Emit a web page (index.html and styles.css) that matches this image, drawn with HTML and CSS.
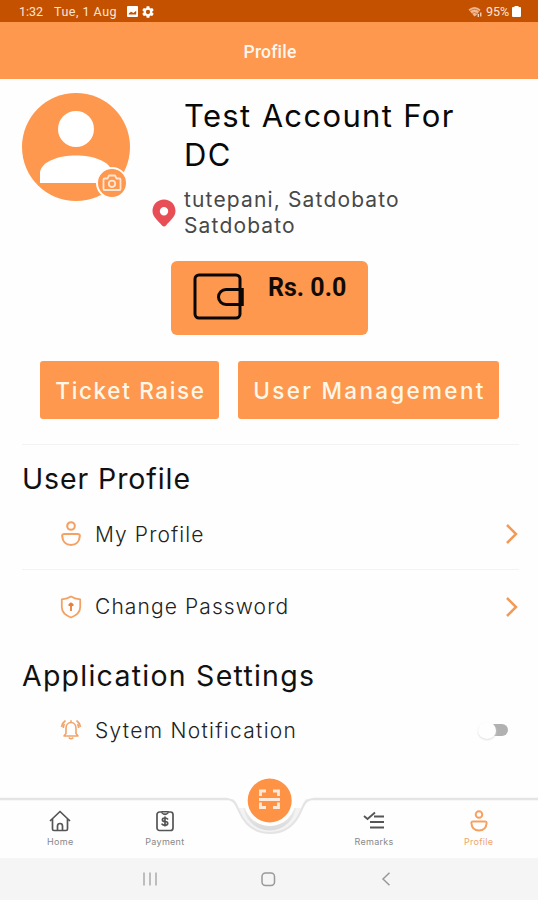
FILE: index.html
```html
<!DOCTYPE html>
<html lang="en">
<head>
    <meta charset="UTF-8">
    <meta name="viewport" content="width=device-width, initial-scale=1.0">
    <title>Profile</title>
    <link rel="stylesheet" href="styles.css">
</head>
<body>
    <div class="status-bar">
        <span class="time">1:32</span>
        <span class="date">Tue, 1 Aug</span>
        <svg class="status-icon" width="11" height="11" viewBox="0 0 11 11"><path fill="#fff" fill-rule="evenodd" d="M1 0h9a1 1 0 0 1 1 1v9a1 1 0 0 1-1 1H1a1 1 0 0 1-1-1V1a1 1 0 0 1 1-1zM1.800 8.500h7.400V4.800L6.500 7 4 5.800 1.800 7.500z"/></svg>
        <svg class="status-icon gear" width="12" height="12" viewBox="2 2 20 20"><path fill="#fff" d="M19.140 12.940c.04-.3.06-.61.06-.94 0-.32-.02-.64-.07-.94l2.030-1.580a.49.49 0 0 0 .12-.61l-1.920-3.320a.49.49 0 0 0-.59-.22l-2.390.96c-.5-.38-1.030-.7-1.620-.94l-.36-2.540a.48.48 0 0 0-.48-.41h-3.840c-.24 0-.43.17-.47.41l-.36 2.540c-.59.24-1.130.57-1.620.94l-2.390-.96a.48.48 0 0 0-.59.22L2.740 8.870c-.12.21-.08.47.12.61l2.030 1.580c-.05.3-.09.63-.09.94s.02.64.07.94l-2.030 1.580a.49.49 0 0 0-.12.61l1.920 3.320c.12.22.37.29.59.22l2.390-.96c.5.38 1.030.7 1.620.94l.36 2.540c.05.24.24.41.48.41h3.840c.24 0 .44-.17.47-.41l.36-2.540c.59-.24 1.130-.56 1.620-.94l2.390.96c.22.08.47 0 .59-.22l1.920-3.320a.48.48 0 0 0-.12-.61zM12 15.600a3.600 3.600 0 1 1 0-7.200 3.600 3.600 0 0 1 0 7.200z"/></svg>
        <svg class="wifi" width="15" height="12" viewBox="0 0 15 12" fill="none"><path fill="#eeb893" d="M.5 3.500Q6.500-1.500 12.500 3.500L8.500 9 6.500 10.500z"/><path stroke="#c45100" stroke-width=".6" d="M2 5q4.500-3.500 9 0M4 7.500q2.500-2 5 0"/><path stroke="#fbe5d8" stroke-width="1.200" d="M10.300 8v3M12.800 6.500v4"/></svg>
        <span class="percent">95%</span>
        <svg width="9" height="11" viewBox="0 0 9 11"><path fill="#fff" d="M2.500 0h4v1H8a1 1 0 0 1 1 1v8a1 1 0 0 1-1 1H1a1 1 0 0 1-1-1V2a1 1 0 0 1 1-1h1.500z"/></svg>
    </div>
    <header class="header">Profile</header>

    <main class="content">
        <section class="account">
            <div class="avatar">
                <svg width="108" height="108" viewBox="0 0 108 108">
                    <circle cx="54" cy="54" r="54" fill="#fe984f"/>
                    <circle cx="54" cy="36" r="18" fill="#fff"/>
                    <path fill="#fff" d="M18 90V79C20 68 37 62.500 54 62.500S88 68 90 79v11z"/>
                </svg>
                <svg class="camera" width="32" height="32" viewBox="0 0 32 32" fill="none" stroke="#ffe5d2" stroke-width="1.800">
                    <circle cx="16" cy="16" r="15" fill="#fe984f" stroke="#fff" stroke-width="2"/>
                    <path stroke-linejoin="round" d="M8.500 11.500h3l1.500-3h6l1.500 3h3a1 1 0 0 1 1 1v9.500a1 1 0 0 1-1 1h-15a1 1 0 0 1-1-1v-9.500a1 1 0 0 1 1-1z"/>
                    <circle cx="16" cy="16.800" r="3.200"/>
                </svg>
            </div>
            <div class="account-info">
                <h1 class="account-name">Test Account For<br>DC</h1>
                <div class="address">
                    <svg class="pin" width="24" height="28" viewBox="0 0 24 28"><path fill="#e84e56" fill-rule="evenodd" d="M12 .5C5.500.500.500 5.500.500 12c0 6 6 10 9.500 14.500q2 1.800 4 0C17.500 22 23.500 18 23.500 12 23.500 5.500 18.500.500 12 .5zM12 8a4.200 4.200 0 1 0 0 8.400A4.200 4.200 0 0 0 12 8z"/></svg>
                    <p>tutepani, Satdobato<br>Satdobato</p>
                </div>
            </div>
        </section>

        <div class="wallet">
            <svg width="52" height="48" viewBox="0 0 52 48" fill="none" stroke="#0b0704" stroke-width="3">
                <rect x="2" y="2" width="45" height="43" rx="4"/>
                <path fill="#fe984f" d="M49 16.500H33a7.500 7.500 0 0 0 0 15h16z"/>
                <path stroke-width="5" d="M48 15v18"/>
            </svg>
            <span class="balance">Rs. 0.0</span>
        </div>

        <div class="actions">
            <button class="btn ticket">Ticket Raise</button>
            <button class="btn users">User Management</button>
        </div>

        <section class="settings">
            <h2 class="title-user">User Profile</h2>
            <div class="row row-profile">
                <svg class="row-icon" width="22" height="26" viewBox="0 0 22 26" fill="none" stroke="#f5a163" stroke-width="2.100"><circle cx="11" cy="5" r="3.800"/><path stroke-linejoin="round" d="M4.500 13h13q2.500 0 2.300 2C19.500 20.500 16 24 11 24S2.500 20.500 2.200 15q-.2-2 2.300-2z"/></svg>
                <span class="label-profile">My Profile</span>
                <svg class="arrow" width="14" height="22" viewBox="0 0 14 22" fill="none" stroke="#f29a58" stroke-width="2.500"><path d="M2 2l9 9-9 9"/></svg>
            </div>
            <div class="row row-password">
                <svg class="row-icon" width="22" height="24" viewBox="0 0 22 24" fill="none" stroke="#f5a163" stroke-width="1.800"><path stroke-linejoin="round" d="M11 1.500C8 3.500 5 4 1.800 4.300V12c0 5.500 4 8.500 9.200 10.500 5.200-2 9.200-5 9.200-10.500V4.300C17 4 14 3.500 11 1.500z"/><circle cx="11" cy="9.500" r="2" fill="#e8803a" stroke="none"/><path stroke="#e8803a" d="M8.500 10h5M11 9.500v6.500"/></svg>
                <span class="label-password">Change Password</span>
                <svg class="arrow" width="14" height="22" viewBox="0 0 14 22" fill="none" stroke="#f29a58" stroke-width="2.500"><path d="M2 2l9 9-9 9"/></svg>
            </div>
            <h2 class="title-app">Application Settings</h2>
            <div class="row row-notification">
                <svg class="row-icon" width="22" height="22" viewBox="0 0 22 22" fill="none" stroke="#f0a46a" stroke-width="1.600"><path stroke-linejoin="round" d="M4 17l2-2.500V9.500C6 6 8 3.500 11 3.500s5 2.500 5 6v5l2 2.500zM11 3.500V1.300M8.800 18.500q2.200 2.500 4.400 0"/><path d="M5.500 1.500Q2.500 3.500 1.500 8M4.500 5Q3.500 6.500 3.300 9M16.500 1.500Q19.500 3.500 20.500 8M17.500 5Q18.500 6.500 18.700 9"/></svg>
                <span class="label-notification">Sytem Notification</span>
                <span class="toggle"></span>
            </div>
        </section>
    </main>

    <nav class="tab-bar">
        <svg class="tab-shape" width="538" height="90" viewBox="0 0 538 90">
            <defs>
                <linearGradient id="shade" x1="0" y1="0" x2="0" y2="1">
                    <stop offset=".35" stop-color="#f4f4f4"/>
                    <stop offset="1" stop-color="#dadada"/>
                </linearGradient>
            </defs>
            <!-- top edge of the bar with the notch for the scan button -->
            <path fill="#f3f3f3" stroke="#e4e4e4" stroke-width="2" d="M226 31c8 0 10 5 13 12 6 14 17 22 31 22s25-8 31-22c3-7 5-12 13-12"/>
            <path fill="#fefefe" d="M220 26h100v4H220z"/>
            <path stroke="#e4e4e4" stroke-width="2.500" d="M0 31h227M313 31h225"/>
            <circle cx="269.700" cy="36" r="26.500" fill="url(#shade)"/>
            <path fill="#fefefe" d="M229 28h81c-5 2-7 7-9 12h-62c-2-5-5-10-10-12z"/>
            <circle cx="269.700" cy="32" r="26" fill="#fff"/>
            <circle cx="269.700" cy="32.500" r="22" fill="#fe9345"/>
            <path fill="none" stroke="#ffe9da" stroke-width="2.800" d="M260.500 28v-5h5.500M273 23h5.500v5M278.500 34.500v5H273M266 39.500h-5.500v-5M259 31.500h21"/>
        </svg>
        <div class="tab home">
            <svg width="22" height="22" viewBox="0 0 22 22" fill="none" stroke="#555" stroke-width="1.700" stroke-linejoin="round"><path d="M1 11L11 1.500 21 11M3.500 9v10q0 1.500 1.500 1.500h12q1.500 0 1.500-1.500V9M8.500 20v-4a2.500 2.500 0 0 1 5 0v4"/></svg>
            <span>Home</span>
        </div>
        <div class="tab payment">
            <svg width="22" height="22" viewBox="0 0 22 22" fill="none" stroke="#555" stroke-width="1.700"><rect x="3" y="2" width="16" height="18.500" rx="2.500"/><path fill="#aaa" stroke-width="1.200" d="M8 1.500h6V3q-3 3-6 0z"/><path d="M14 9.500q-1-1.500-3-1.500c-3.500 0-3.500 3.200 0 3.500 3.800.3 3.500 3.800-.2 3.800-1.600 0-2.700-.6-3.200-1.600M11 6.500v10"/></svg>
            <span>Payment</span>
        </div>
        <div class="tab scan"></div>
        <div class="tab remarks">
            <svg width="22" height="22" viewBox="0 0 22 22" fill="none" stroke="#555" stroke-width="1.800"><path d="M1 6l3.500 3L12 2.500M11 6.500h10M7 12h14M7 17.500h14"/></svg>
            <span>Remarks</span>
        </div>
        <div class="tab active">
            <svg width="18" height="22" viewBox="0 0 22 26" fill="none" stroke="#f8a060" stroke-width="2.400"><circle cx="11" cy="5" r="4"/><path stroke-linejoin="round" d="M4 13.500h14q2.500 0 2.300 2C19.800 21.500 16 24.500 11 24.500S2.200 21.500 1.700 15.500q-.2-2 2.300-2z"/></svg>
            <span>Profile</span>
        </div>
    </nav>

    <div class="system-nav">
        <svg width="14" height="14" viewBox="0 0 14 14" stroke="#aaa" stroke-width="1.500"><path d="M1 .5v13M7 .5v13M13 .5v13"/></svg>
        <svg width="16" height="15" viewBox="0 0 16 15" fill="none" stroke="#999" stroke-width="1.500"><rect x="1" y="1" width="12.500" height="12.500" rx="3.500"/></svg>
        <svg width="10" height="14" viewBox="0 0 10 14" fill="none" stroke="#999" stroke-width="1.500"><path d="M8.500.7L2 7l6.500 6.300"/></svg>
    </div>
</body>
</html>
```
FILE: styles.css
```css
/* General Styles */
* {
    box-sizing: border-box;
}
body {
    font-family: Inter, "Open Sans", sans-serif;
    margin: 0;
    height: 900px;
    overflow: hidden;
    display: flex;
    flex-direction: column;
    background-color: #fefefe;
    color: #111;
}
h1, h2, p {
    margin: 0;
    font-weight: 400;
}
svg {
    display: block;
    flex-shrink: 0;
}
.status-bar {
    height: 22px;
    display: flex;
    align-items: center;
    padding: 1px 17px 0 19px;
    background-color: #c45100;
    color: #fbe5d8;
    font: 12.5px/21px Roboto, sans-serif;
}
.time {
    width: 35px;
}
.date {
    width: 73px;
    letter-spacing: 0.5px;
}
.gear {
    margin-left: 4px;
}
.wifi {
    margin-left: auto;
    margin-right: 3px;
}
.percent {
    width: 26px;
}
.header {
    height: 57px;
    padding: 2px 0 0 2px;
    background-color: #fe984f;
    color: #fff7ee;
    font: 500 17.5px/56px Roboto, sans-serif;
    letter-spacing: 0.2px;
    text-align: center;
}
.content {
    height: 698px;
    flex-shrink: 0;
}

/* Account */
.account {
    display: flex;
    height: 182px;
    padding: 14px 22px 0;
}
.avatar {
    position: relative;
    width: 108px;
    height: 108px;
}
.camera {
    position: absolute;
    left: 74px;
    top: 74px;
}
.account-info {
    padding: 3px 0 0 22px;
}
.account-name {
    margin-left: 32px;
    font-size: 31px;
    line-height: 39px;
    letter-spacing: 1.35px;
    white-space: nowrap;
    color: #080808;
}
.address {
    display: flex;
    align-items: center;
    gap: 8px;
    margin-top: 13px;
    font-size: 21px;
    line-height: 26px;
    letter-spacing: 1.15px;
    color: #484848;
    white-space: nowrap;
}
.wallet {
    display: flex;
    width: 197px;
    height: 74px;
    margin-left: 171px;
    padding: 12px 0 0 22px;
    border-radius: 6px;
    background-color: #fe984f;
}
.balance {
    margin-left: 23px;
    font: 700 25px/30px Roboto, sans-serif;
    color: #120b05;
}
.actions {
    display: flex;
    gap: 19px;
    height: 109px;
    padding: 26px 0 0 40px;
}
.btn {
    height: 58px;
    padding: 0 0 0 2px;
    border: 0;
    border-radius: 3px;
    background-color: #fe984f;
    color: #fff7e8;
    font: 500 22.5px Inter, sans-serif;
    white-space: nowrap;
}
.ticket {
    width: 179px;
    letter-spacing: 1.65px;
}
.users {
    width: 261px;
    letter-spacing: 2.3px;
}

/* Settings */
.settings {
    margin: 0 19px 0 22px;
    border-top: 1px solid #f3f3f3;
}
h2 {
    height: 54px;
    padding-top: 14px;
    font-size: 28.5px;
    line-height: 40px;
    color: #111;
}
.title-user {
    letter-spacing: 0.9px;
}
.title-app {
    padding-top: 13px;
    letter-spacing: 1.25px;
}
.row {
    display: flex;
    align-items: center;
    padding: 0 0 0 38px;
    font-size: 21px;
    font-weight: 300;
    letter-spacing: 1.1px;
    color: #222;
    white-space: nowrap;
}
.row-profile {
    height: 71px;
    border-bottom: 1px solid #f3f3f3;
}
.row-password {
    height: 73px;
}
.row-notification {
    height: 66px;
}
.label-notification {
    letter-spacing: 1.3px;
}
.row-icon {
    width: 22px;
    margin-right: 13px;
}
.arrow {
    margin-left: auto;
}
.toggle {
    position: relative;
    width: 29px;
    height: 12px;
    margin: 0 11px 0 auto;
    border-radius: 6px;
    background-color: #b1b1b1;
}
.toggle::before {
    content: "";
    position: absolute;
    left: -1px;
    top: -2px;
    width: 18px;
    height: 17px;
    border-radius: 50%;
    background-color: #fefefe;
    box-shadow: 0 1px 2px #ddd;
}

/* Bottom bars */
.tab-bar {
    position: relative;
    display: flex;
    height: 90px;
    margin-top: -9px;
    padding: 42px 7px 0 8px;
    flex-shrink: 0;
}
.tab-shape {
    position: absolute;
    left: 0;
    top: 0;
}
.tab {
    position: relative;
    flex: 1;
    display: flex;
    flex-direction: column;
    align-items: center;
    gap: 4px;
    font-size: 9px;
    line-height: 12px;
    letter-spacing: 0.3px;
    color: #888;
}
.active {
    color: #eea56e;
}
.system-nav {
    display: flex;
    height: 42px;
    padding: 14px 147px 0 143px;
    justify-content: space-between;
    background-color: #f5f5f5;
}
```
